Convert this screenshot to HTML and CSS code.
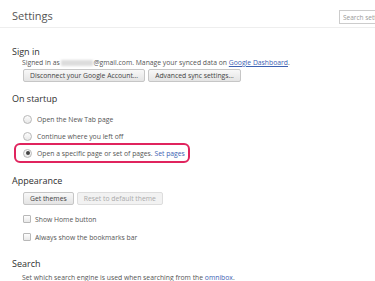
FILE: index.html
```html
<!DOCTYPE html>
<html lang="en">
<head>
  <meta charset="UTF-8" />
  <meta name="viewport" content="width=device-width, initial-scale=1.0" />
  <title>Settings</title>
  <link rel="stylesheet" href="styles.css">
</head>
<body>
  <header class="top">
    <h1>Settings</h1>
    <input type="text" class="search" placeholder="Search settings" />
  </header>

  <section class="group first">
    <h3>Sign in</h3>
    <div class="body">
      <p class="note">Signed in as <span class="blur"></span>@gmail.com. Manage your synced data on <a href="#">Google Dashboard</a>.</p>
      <div class="buttons">
        <button class="btn">Disconnect your Google Account...</button>
        <button class="btn">Advanced sync settings...</button>
      </div>
    </div>
  </section>

  <section class="group">
    <h3>On startup</h3>
    <div class="body options">
      <label class="row"><span class="radio"></span>Open the New Tab page</label>
      <label class="row"><span class="radio"></span>Continue where you left off</label>
      <label class="row picked"><span class="radio on"></span>Open a specific page or set of pages.&nbsp;<a href="#">Set pages</a></label>
    </div>
  </section>

  <section class="group">
    <h3>Appearance</h3>
    <div class="body">
      <div class="buttons tight">
        <button class="btn">Get themes</button>
        <button class="btn" disabled>Reset to default theme</button>
      </div>
      <div class="checks">
        <label class="row"><span class="check"></span>Show Home button</label>
        <label class="row"><span class="check"></span>Always show the bookmarks bar</label>
      </div>
    </div>
  </section>

  <section class="group">
    <h3>Search</h3>
    <div class="body">
      <p class="note desc">Set which search engine is used when searching from the <a href="#">omnibox</a>.</p>
    </div>
  </section>
</body>
</html>
```

FILE: styles.css
```css
* { box-sizing: border-box; margin: 0; padding: 0; }
html, body { overflow: hidden; }
body { font-family: "Open Sans", "Noto Sans", sans-serif; background: #fff; color: #444; width: 375px; height: 281px; }
a { color: #3d62b3; text-decoration: none; }

.top { display: flex; justify-content: space-between; height: 28px; padding: 4px 0 0 12px; margin-right: -30px; border-bottom: 1px solid #eee; }
.top h1 { font-size: 11px; font-weight: normal; color: #555; line-height: 23px; }
.search { align-self: flex-end; margin-bottom: 3px; width: 66px; height: 14px; border: 1px solid #ccc; font-family: inherit; font-size: 6.5px; padding: 0 3px; color: #999; }
.search::placeholder { color: #999; }

.group { margin-top: 12px; }
.group.first { margin-top: 18px; }
.group.first + .group { margin-top: 11px; }
.group h3 { font-size: 9px; font-weight: normal; color: #303030; line-height: 12px; padding-left: 12px; }
.body { padding-left: 22px; }

.note { font-size: 6.8px; line-height: 10px; color: #555; }
.note a { text-decoration: underline; }
.blur { display: inline-block; width: 32px; height: 6px; background: #dcdcdc; filter: blur(1px); vertical-align: middle; }
.desc { margin-top: 3px; }

.buttons { display: flex; gap: 3px; margin-top: 1px; padding-left: 1px; }
.buttons.tight { margin-top: 5px; }
.btn { height: 13px; padding: 0 6px; font-family: inherit; font-size: 6.8px; color: #444; background: linear-gradient(#f8f8f8, #e4e4e4); border: 1px solid #c6c6c6; border-radius: 2px; }
.btn:disabled { color: #aaa; background: #f2f2f2; border-color: #ddd; }

.options { margin-top: 6px; }
.row { display: flex; align-items: center; height: 17px; font-size: 6.8px; color: #555; padding-left: 1px; }
.radio { width: 9px; height: 9px; border-radius: 50%; border: 1px solid #b8b8b8; background: linear-gradient(#fdfdfd, #e8e8e8); margin-right: 5px; display: flex; align-items: center; justify-content: center; }
.radio.on::after { content: ""; width: 4px; height: 4px; border-radius: 50%; background: #444; }
.row.picked { width: 176px; height: 20px; margin: -2px 0 0 -8px; padding-left: 7px; border: 2px solid #e0245e; border-radius: 6px; }

.checks { margin-top: 5px; }
.checks .row { height: 18px; }
.check { width: 8px; height: 8px; border: 1px solid #b8b8b8; border-radius: 1px; background: linear-gradient(#fdfdfd, #e8e8e8); margin-right: 4px; }
```
